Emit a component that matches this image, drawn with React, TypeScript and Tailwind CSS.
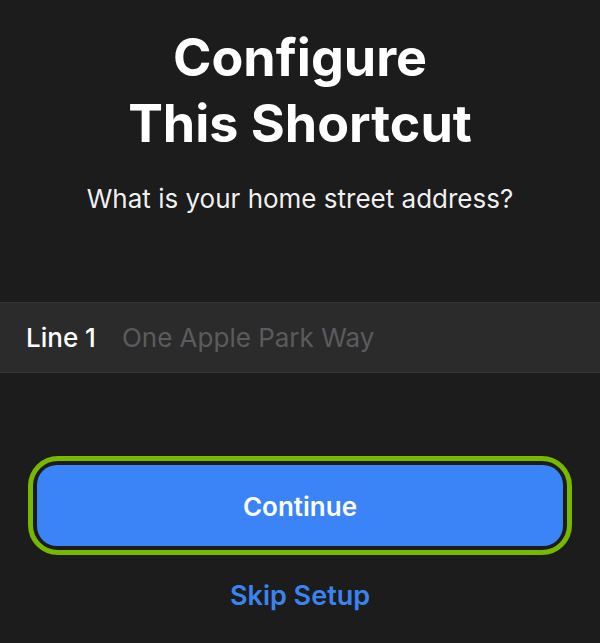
import React from 'react';

const App: React.FC = () => {
  return (
    <div className="min-h-[643px] w-full bg-[#1c1c1c] font-['Inter','Noto_Sans',sans-serif] text-white flex flex-col items-center pt-[25px]">
      <h1 className="text-[52px] leading-[66px] font-bold text-center">
        Configure
        <br />
        This Shortcut
      </h1>

      <p className="mt-[26px] text-[26px] leading-[32px] text-center text-white/95">
        What is your home street address?
      </p>

      <div className="mt-[87px] w-full h-[71px] bg-[#2b2b2b] border-y border-[#363636] flex items-center px-[26px]">
        <span className="text-[26px] font-medium">Line 1</span>
        <input
          className="ml-[26px] flex-1 bg-transparent outline-none text-[26px] text-white placeholder:text-[#5b5b5e]"
          placeholder="One Apple Park Way"
        />
      </div>

      <div className="mt-[83px] w-[544px] rounded-[30px] border-[5px] border-[#78b800] p-[4px]">
        <button className="w-full h-[81px] pt-[2px] rounded-[20px] bg-[#3b84f7] text-[26px] font-semibold text-white">
          Continue
        </button>
      </div>

      <button className="mt-[25px] text-[27px] leading-[32px] font-semibold text-[#3b84f0]">
        Skip Setup
      </button>
    </div>
  );
};

export default App;
